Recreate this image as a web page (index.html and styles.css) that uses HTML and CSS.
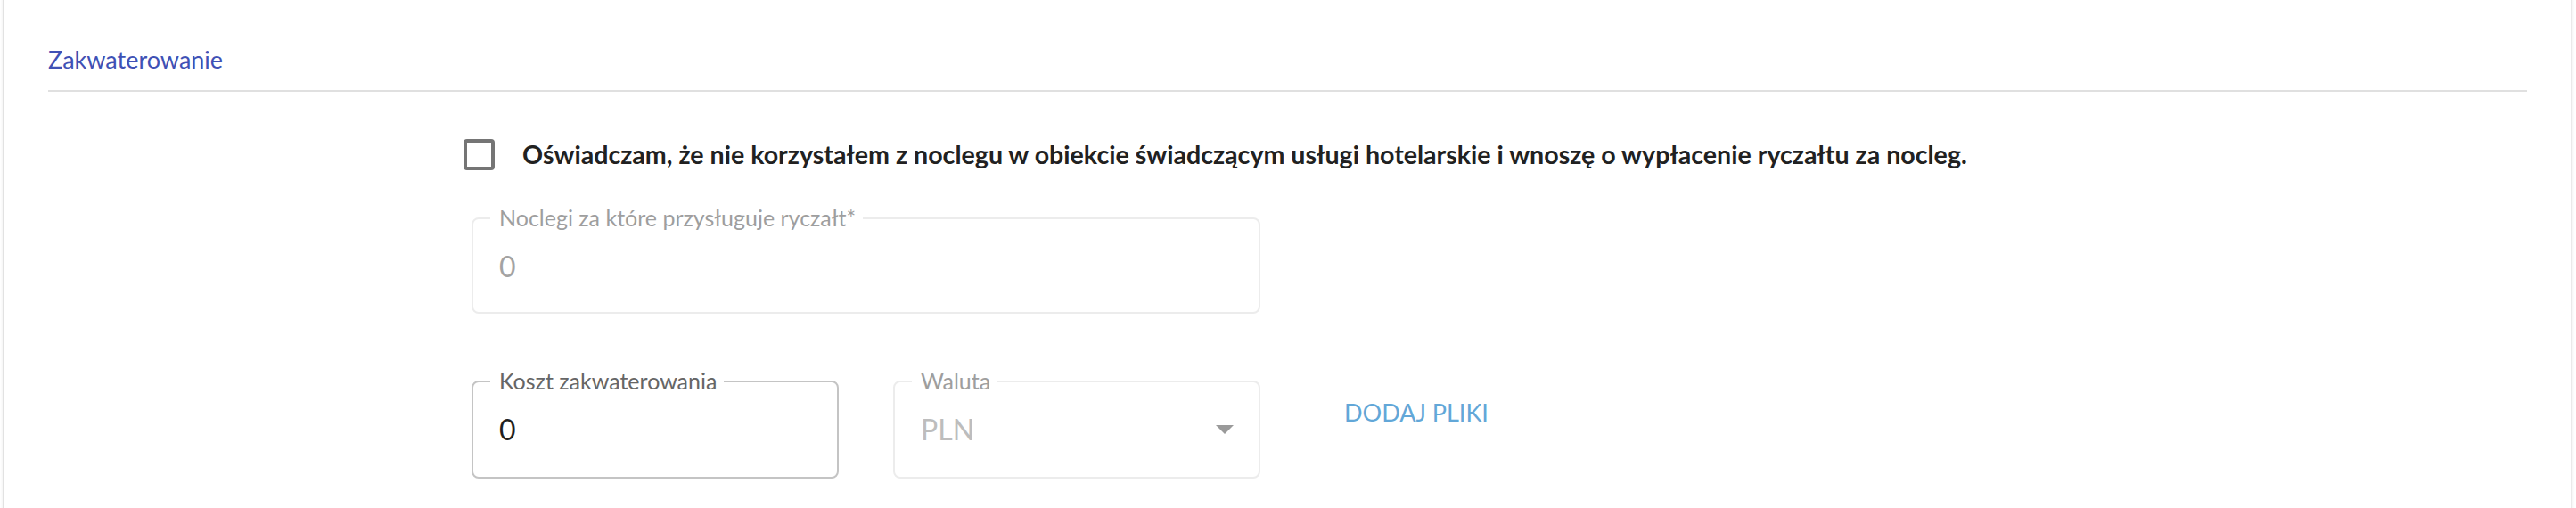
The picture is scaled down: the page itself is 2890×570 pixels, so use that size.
FILE: index.html
```html
<!DOCTYPE html>
<html lang="pl">
<head>
<meta charset="utf-8">
<title>Zakwaterowanie</title>
<link rel="stylesheet" href="styles.css">
</head>
<body>
<div class="card">
  <div class="section-head">
    <h2 class="section-title">Zakwaterowanie</h2>
  </div>
  <div class="divider"></div>
  <div class="content">
    <label class="check-row">
      <span class="checkbox"></span>
      <span class="check-text">Oświadczam, że nie korzystałem z noclegu w obiekcie świadczącym usługi hotelarskie i wnoszę o wypłacenie ryczałtu za nocleg.</span>
    </label>

    <div class="field field-wide field-disabled">
      <span class="field-label">Noclegi za które przysługuje ryczałt*</span>
      <span class="field-value">0</span>
    </div>

    <div class="field-row">
      <div class="field field-half">
        <span class="field-label">Koszt zakwaterowania</span>
        <span class="field-value">0</span>
      </div>
      <div class="field field-half field-disabled field-select">
        <span class="field-label">Waluta</span>
        <span class="field-value select-value">PLN</span>
        <svg class="select-arrow" viewBox="0 0 24 24" width="48" height="48"><path d="M7 10l5 5 5-5z"/></svg>
      </div>
      <button class="add-files" type="button">DODAJ PLIKI</button>
    </div>
  </div>
</div>
</body>
</html>
```

FILE: styles.css
```css
* { box-sizing: border-box; }

html, body {
  margin: 0;
  padding: 0;
  background: #ffffff;
  font-family: Lato, "Noto Sans", "Liberation Sans", sans-serif;
  overflow: hidden;
}

.card {
  margin: -10px 6px 0 3px;
  padding: 61px 49px 60px 50px;
  min-height: 600px;
  background: #ffffff;
  border-left: 1px solid #e2e2e2;
  box-shadow: 1px 0 4px rgba(0, 0, 0, 0.14);
}

.section-head {
  height: 31px;
}

.section-title {
  margin: 0;
  font-size: 27px;
  line-height: 31px;
  font-weight: 400;
  color: #3f51b5;
}

.divider {
  margin-top: 19px;
  height: 2px;
  background: #e0e0e0;
}

.content {
  padding-left: 475px;
}

.check-row {
  display: flex;
  align-items: center;
  height: 48px;
  margin-top: 46px;
  margin-left: -9px;
  cursor: pointer;
}

.checkbox {
  flex: 0 0 auto;
  width: 35px;
  height: 35px;
  border: 4px solid #757575;
  border-radius: 4px;
}

.check-text {
  margin-left: 31px;
  font-size: 28.6px;
  font-weight: 700;
  color: #212121;
  white-space: nowrap;
}

.field {
  position: relative;
  height: 110px;
  border: 2px solid #c4c4c4;
  border-radius: 8px;
  padding: 34px 27px 0 29px;
}

.field-wide {
  width: 885px;
  height: 108px;
  margin-top: 47px;
}

.field-half {
  width: 412px;
}

.field-disabled {
  border-color: #ececec;
}

.field-label {
  position: absolute;
  left: 19px;
  top: -16px;
  padding: 0 8px 0 10px;
  background: #ffffff;
  font-size: 25px;
  line-height: 29px;
  color: #666666;
  white-space: nowrap;
}

.field-disabled .field-label {
  color: #9e9e9e;
}

.field-value {
  display: block;
  font-size: 32px;
  line-height: 38px;
  color: #1f1f1f;
}

.field-disabled .field-value {
  color: #a3a3a3;
}

.field-disabled .select-value {
  color: #bdbdbd;
}

.select-arrow {
  position: absolute;
  right: 14px;
  top: 28px;
  fill: #9a9a9a;
}

.field-row {
  display: flex;
  align-items: flex-start;
  gap: 61px;
  margin-top: 75px;
}

.add-files {
  margin: 20px 0 0 33px;
  padding: 0;
  border: 0;
  background: none;
  font-family: inherit;
  font-size: 27px;
  line-height: 31px;
  font-weight: 400;
  color: #62a7d8;
  cursor: pointer;
}
```
